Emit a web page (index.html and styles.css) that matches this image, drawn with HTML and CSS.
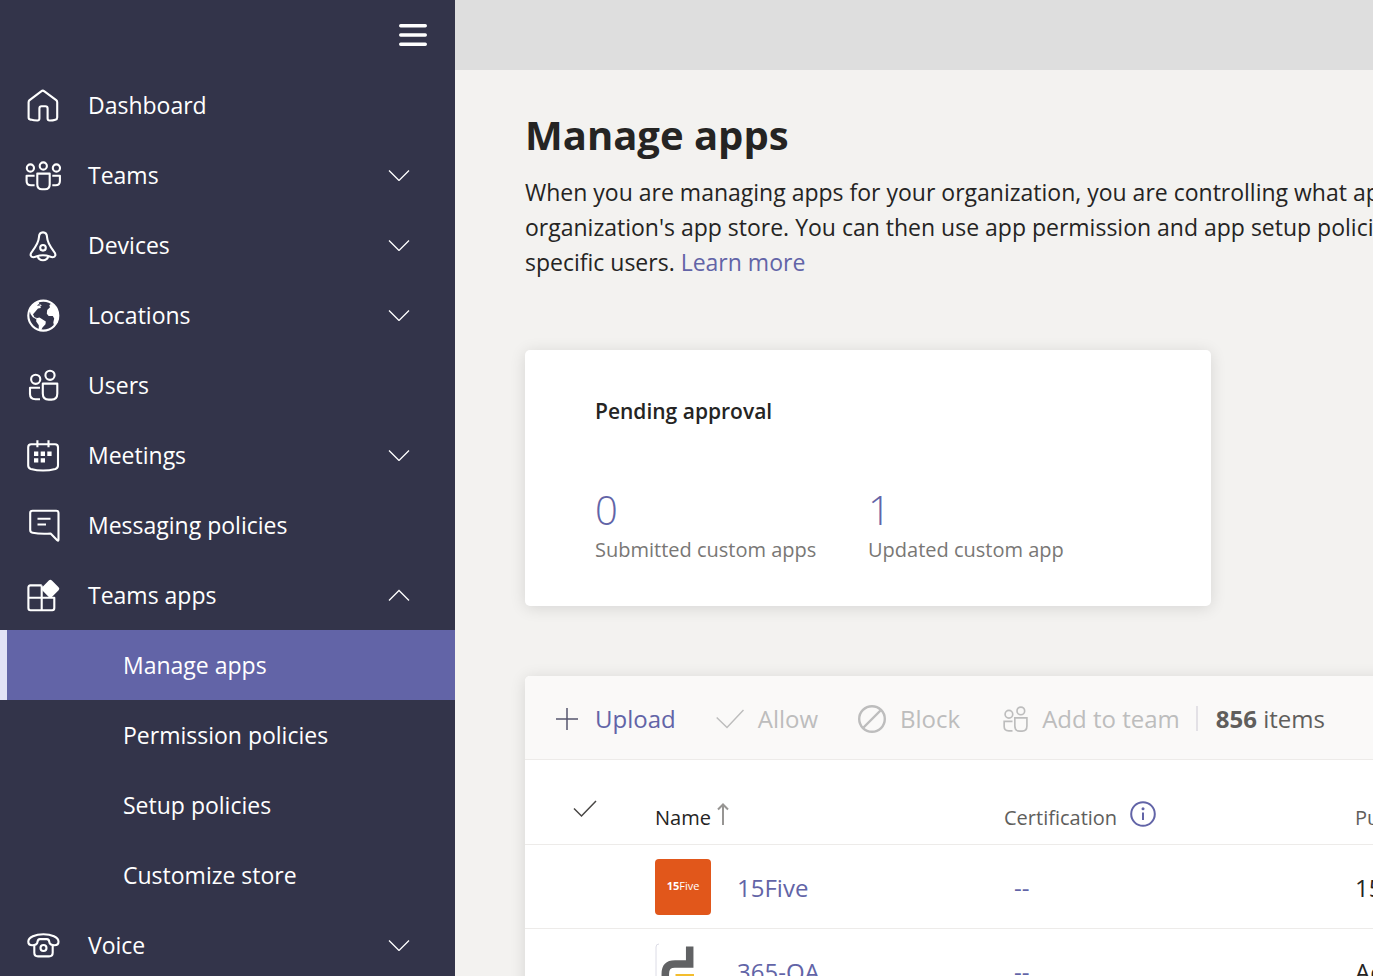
FILE: index.html
```html
<!DOCTYPE html>
<html lang="en">
<head>
  <meta charset="UTF-8" />
  <title>Manage apps</title>
  <link rel="stylesheet" href="styles.css">
</head>
<body>
  <svg class="sprite" aria-hidden="true">
    <symbol id="chevron-down" viewBox="0 0 22 12"><path d="M1 1.5 L11 11.5 L21 1.5" /></symbol>
    <symbol id="chevron-up" viewBox="0 0 22 12"><path d="M1 11.5 L11 1.5 L21 11.5" /></symbol>
    <symbol id="people" viewBox="0 0 36 36">
      <circle cx="10.7" cy="12.3" r="4.6" /><circle cx="25" cy="8.3" r="4.6" />
      <path d="M17.8 16.6 H32.3 V26.5 Q32.3 32.6 26.5 32.6 H23.8 Q17.8 32.6 17.8 26.5 Z" />
      <path d="M15 20.8 H5 V27 Q5 32.2 10.5 32.2 H15" />
    </symbol>
  </svg>

  <div class="layout">
    <nav class="sidebar">
      <div class="sidebar-top">
        <button class="menu-button" aria-label="Toggle navigation">
          <svg width="28" height="24" viewBox="0 0 28 24"><path d="M1.7 2.7 H26.3 M1.7 12 H26.3 M1.7 21.3 H26.3" /></svg>
        </button>
      </div>
      <ul class="nav-list">
        <li><a class="nav-item" href="#">
          <svg class="icon" viewBox="0 0 36 36"><path d="M3.6 15.2 Q3.6 14 4.6 13.1 L16.2 4.3 Q17.8 3.1 19.4 4.3 L31.2 13.1 Q32.2 14 32.2 15.2 V30.4 Q32.2 32.3 30.4 32.7 Q27.5 33.6 24.6 33.5 Q22.6 33.4 22.6 31.5 V21.4 Q22.6 19.2 20.4 19.2 H16.6 Q14.4 19.2 14.4 21.4 V31.5 Q14.4 33.6 12.3 33.5 Q9 33.5 5.6 32.6 Q3.6 32.2 3.6 30.4 Z" /></svg>
          <span>Dashboard</span>
        </a></li>
        <li><button class="nav-item">
          <svg class="icon" viewBox="0 0 36 36">
            <circle cx="5.4" cy="11" r="3.6" /><circle cx="18.3" cy="9" r="3.6" /><circle cx="31.4" cy="11" r="3.6" />
            <path d="M12.3 16.6 H24.7 V27.5 Q24.7 32.2 20 32.2 H17 Q12.3 32.2 12.3 27.5 Z" />
            <path d="M9.6 18.8 H1.6 V24 Q1.6 28.3 6 28.3 H9.6 M27.3 18.8 H34.9 V24 Q34.9 28.3 30.6 28.3 H27.3" />
          </svg>
          <span>Teams</span><svg class="chevron"><use href="#chevron-down" /></svg>
        </button></li>
        <li><button class="nav-item">
          <svg class="icon" viewBox="0 0 36 36">
            <path d="M18 5.4 C15.2 5.4 14 7.6 13.9 10.5 C13.7 15.5 11 19.3 7.2 24.3 C4.3 27.8 5.8 30.2 8.2 30.3 C11 30.4 12 28.2 18 28.2 C24 28.2 25 30.4 27.8 30.3 C30.2 30.2 31.7 27.8 28.8 24.3 C25 19.3 22.3 15.5 22.1 10.5 C22 7.6 20.8 5.4 18 5.4 Z" />
            <circle cx="18" cy="20.8" r="2.8" />
            <path d="M12.7 29.3 C14 34.5 22 34.5 23.3 29.3" />
          </svg>
          <span>Devices</span><svg class="chevron"><use href="#chevron-down" /></svg>
        </button></li>
        <li><button class="nav-item">
          <svg class="icon" viewBox="0 0 36 36">
            <circle cx="18.3" cy="18.6" r="15" />
            <path class="solid" d="M4.5 13 C6.5 8.5 10 5.5 13.5 4.8 L14.3 6.8 L11.8 8.5 L15.3 8.7 L15.8 11 L13 11.5 L10 15 L8 17.3 L9.5 20.3 L12 21 L11 22 L7.8 20.3 L5.5 17 Z" />
            <path class="solid" d="M11.3 21.3 L14.5 20.5 L20.8 24.4 L20.5 27.2 L17.5 30.5 L16 33.6 H13.7 L13.8 28.3 L11.2 24.5 Z" />
            <path class="solid" d="M26 6.7 L24.3 8.2 L25 10.2 L22.2 13 L21.8 16.8 L23.7 19 L27.8 19 L29.2 21.5 L28.3 25.5 L29.2 29.4 L32.3 26 Q35.5 18.5 32 12 Q30 8.6 26 6.7 Z" />
            <path class="solid" d="M14.5 7 L17 8.5 L14.8 9 Z" />
          </svg>
          <span>Locations</span><svg class="chevron"><use href="#chevron-down" /></svg>
        </button></li>
        <li><a class="nav-item" href="#">
          <svg class="icon"><use href="#people" /></svg>
          <span>Users</span>
        </a></li>
        <li><button class="nav-item">
          <svg class="icon" viewBox="0 0 36 36">
            <path d="M6.3 7.3 H30 Q33 7.3 33 10.3 V28.4 Q33 31 30.4 31.9 Q18 35.2 5.8 31.9 Q3.2 31 3.2 28.4 V10.3 Q3.2 7.3 6.3 7.3 Z" />
            <path d="M12.4 3.2 V10.3 M23.5 3.2 V10.3" />
            <path class="solid" d="M9 14.6 h4.3 v4.3 h-4.3 z M15.7 14.6 h4.3 v4.3 h-4.3 z M22.3 14.6 h4.3 v4.3 h-4.3 z M9 21.2 h4.3 v4.3 h-4.3 z M15.7 21.2 h4.3 v4.3 h-4.3 z" />
          </svg>
          <span>Meetings</span><svg class="chevron"><use href="#chevron-down" /></svg>
        </button></li>
        <li><a class="nav-item" href="#">
          <svg class="icon" viewBox="0 0 36 36">
            <path d="M7.5 3.7 H31.2 Q33.5 3.7 33.5 6 V32.5 Q33.5 34.3 32.2 33.2 L25.6 26.6 Q15 27.3 7.6 25.8 Q5.2 25.3 5.2 23 V6 Q5.2 3.7 7.5 3.7 Z" />
            <path d="M12.5 11.8 H25.5 M12.5 17.5 H21" />
          </svg>
          <span>Messaging policies</span>
        </a></li>
        <li><button class="nav-item" aria-expanded="true">
          <svg class="icon" viewBox="0 0 36 36">
            <path d="M16.7 8.4 H5.4 Q3.4 8.4 3.4 10.4 V31 Q3.4 33.2 5.4 33.2 H27.3 Q29.3 33.2 29.3 31 V20.8 H3.4 M16.7 8.4 V33.2" />
            <path class="solid" d="M23.8 3.5 Q25.3 2 26.9 3.5 L33.6 10.2 Q35.1 11.8 33.6 13.3 L26.9 20 Q25.3 21.5 23.8 20 L17.2 13.3 Q15.7 11.8 17.2 10.2 Z" />
          </svg>
          <span>Teams apps</span><svg class="chevron"><use href="#chevron-up" /></svg>
        </button>
          <ul class="nav-list">
            <li><a class="nav-item sub active" href="#" aria-current="page">Manage apps</a></li>
            <li><a class="nav-item sub" href="#">Permission policies</a></li>
            <li><a class="nav-item sub" href="#">Setup policies</a></li>
            <li><a class="nav-item sub" href="#">Customize store</a></li>
          </ul>
        </li>
        <li><button class="nav-item">
          <svg class="icon" viewBox="0 0 36 36">
            <path d="M18.4 7.2 C10.5 7.2 3.3 10.2 3.3 14.8 C3.3 17.2 4.8 18.3 7.2 18.3 C10.3 18.3 12.3 17.2 12.6 14.7 C12.7 12.8 13.5 12.2 15 12.1 H21.8 C23.3 12.2 24.1 12.8 24.2 14.7 C24.5 17.2 26.5 18.3 29.6 18.3 C32 18.3 33.5 17.2 33.5 14.8 C33.5 10.2 26.3 7.2 18.4 7.2 Z" />
            <path d="M9.3 18.3 V25.8 Q9.3 29.4 13 29.4 H24 Q27.7 29.4 27.7 25.8 V18.3" />
            <circle cx="18.5" cy="21" r="3" />
          </svg>
          <span>Voice</span><svg class="chevron"><use href="#chevron-down" /></svg>
        </button></li>
      </ul>
    </nav>

    <main class="main">
      <div class="topbar"></div>
      <div class="content">
        <h1>Manage apps</h1>
        <p class="intro">When you are managing apps for your organization, you are controlling what apps are available to users in your<br>
          organization's app store. You can then use app permission and app setup policies to configure what apps for<br>
          specific users. <a href="#">Learn more</a></p>

        <section class="card">
          <h2>Pending approval</h2>
          <div class="stats">
            <div><a class="number" href="#">0</a><span class="label">Submitted custom apps</span></div>
            <div><a class="number" href="#">1</a><span class="label">Updated custom app</span></div>
          </div>
        </section>

        <section class="panel">
          <div class="toolbar">
            <button class="tool upload">
              <svg width="22" height="22" viewBox="0 0 22 22"><path d="M0 11 H22 M11 0 V22" /></svg>
              Upload
            </button>
            <button class="tool allow" disabled>
              <svg width="28" height="20" viewBox="0 0 28 20"><path d="M.7 8.5 L11 18.5 L27.5 1" /></svg>
              Allow
            </button>
            <button class="tool block" disabled>
              <svg width="28" height="28" viewBox="0 0 28 28"><circle cx="14" cy="14" r="12.8" /><path d="M5.5 22.5 L22.5 5.5" /></svg>
              Block
            </button>
            <button class="tool team" disabled>
              <svg width="30" height="30"><use href="#people" /></svg>
              Add to team
            </button>
            <span class="divider"></span>
            <span class="count"><b>856</b> items</span>
          </div>
          <table>
            <thead>
              <tr>
                <th class="col-check"><button aria-label="Select all">
                  <svg width="24" height="18" viewBox="0 0 24 18"><path d="M1 8.5 L8.5 16 L23 1" /></svg>
                </button></th>
                <th class="col-name"><div class="head">Name
                  <svg width="12" height="22" viewBox="0 0 12 22"><path d="M6 22 V1.5 M1 6.5 L6 1.5 L11 6.5" /></svg>
                </div></th>
                <th class="col-cert"><div class="head">Certification
                  <svg class="info" width="26" height="26" viewBox="0 0 26 26"><circle cx="13" cy="13" r="11.8" /><path d="M13 11.5 V19" /><circle class="dot" cx="13" cy="7.7" r="1.5" /></svg>
                </div></th>
                <th><div class="head">Publisher</div></th>
              </tr>
            </thead>
            <tbody>
              <tr>
                <td></td>
                <td><div class="app">
                  <span class="logo five"><b>15</b>Five</span>
                  <a href="#">15Five</a>
                </div></td>
                <td class="cert">--</td>
                <td>15Five</td>
              </tr>
              <tr>
                <td></td>
                <td><div class="app">
                  <svg class="logo" viewBox="0 0 56 56">
                    <path d="M1 56 V4 Q1 1 4 1" stroke="#dcdce6" />
                    <path d="M34.7 3.5 V21 H20 Q10.3 21 10.3 31 V47" stroke="#616264" stroke-width="7.5" />
                    <path d="M20.5 33 H39" stroke="#f3bd2e" stroke-width="4" />
                  </svg>
                  <a href="#">365-QA</a>
                </div></td>
                <td class="cert">--</td>
                <td>Adenin</td>
              </tr>
            </tbody>
          </table>
        </section>
      </div>
    </main>
  </div>
</body>
</html>
```
FILE: styles.css
```css
* {
  box-sizing: border-box;
}
body {
  margin: 0;
  background-color: #f3f2f0;
  color: #252423;
  font-family: "Open Sans", "Noto Sans", sans-serif;
  font-size: 23px;
  overflow: hidden;
}
a {
  color: #6264a7;
  text-decoration: none;
}
button {
  font: inherit;
  color: inherit;
  background: none;
  border: none;
  padding: 0;
  cursor: pointer;
}
svg {
  fill: none;
  stroke: currentColor;
  flex: none;
}
.sprite {
  display: none;
}
.layout {
  display: flex;
  height: 100vh;
}

/* navigation */
.sidebar {
  flex: none;
  width: 455px;
  overflow: hidden;
  background-color: #33344a;
  color: #fff;
}
.sidebar-top {
  display: flex;
  align-items: center;
  justify-content: flex-end;
  height: 70px;
  padding-right: 28px;
}
.menu-button {
  display: flex;
}
.menu-button svg {
  stroke-width: 3.4;
  stroke-linecap: round;
}
.nav-list {
  list-style: none;
  margin: 0;
  padding: 0;
}
.nav-item {
  display: flex;
  align-items: center;
  width: 100%;
  height: 70px;
  padding: 0 45px 0 25px;
  color: #fff;
  text-align: left;
}
.nav-item span {
  flex: 1;
}
.nav-item.sub {
  padding-left: 123px;
}
.nav-item.active {
  background-color: #6264a7;
  border-left: 7px solid #e2e2f6;
  padding-left: 116px;
}
.icon {
  width: 36px;
  height: 36px;
  margin-right: 27px;
  stroke-width: 2.1;
  stroke-linejoin: round;
}
.solid {
  fill: currentColor;
  stroke: none;
}
.chevron {
  width: 22px;
  height: 12px;
  stroke-width: 1.3;
}

/* page */
.main {
  flex: 1;
  min-width: 0;
  overflow: hidden;
}
.topbar {
  height: 70px;
  background-color: #dedede;
}
.content {
  padding: 35px 0 0 70px;
}
h1 {
  margin: 0;
  font-size: 40px;
  line-height: 60px;
}
.intro {
  margin: 10px 0 70px;
  line-height: 35px;
  white-space: nowrap;
}
.card {
  width: 686px;
  height: 256px;
  padding: 46px 70px 0;
  background-color: #fff;
  border-radius: 5px;
  box-shadow: 0 2px 16px rgba(0, 0, 0, 0.12);
}
h2 {
  margin: 0;
  font-size: 21px;
  font-weight: 600;
  line-height: 30px;
}
.stats {
  display: grid;
  grid-template-columns: 273px 1fr;
  margin-top: 59px;
}
.number {
  display: block;
  font-size: 40px;
  font-weight: 300;
  line-height: 50px;
}
.label {
  display: block;
  color: #797775;
  font-size: 20px;
  line-height: 30px;
}

/* app list */
.panel {
  width: 1400px;
  margin-top: 70px;
  background-color: #fff;
  border-radius: 5px;
  box-shadow: 0 2px 16px rgba(0, 0, 0, 0.12);
}
.toolbar {
  display: flex;
  align-items: center;
  height: 84px;
  padding: 2px 0 0 31px;
  background-color: #faf9f8;
  border-bottom: 1px solid #edebe9;
  border-radius: 5px 5px 0 0;
  font-size: 24px;
}
.tool {
  display: flex;
  align-items: center;
  gap: 14px;
  margin-right: 40px;
}
.tool svg {
  stroke-width: 1.5;
}
.tool:disabled {
  color: #bdbdbd;
  cursor: default;
}
.upload {
  gap: 17px;
  color: #6264a7;
}
.upload svg {
  color: #55566e;
}
.block svg {
  stroke-width: 2.4;
}
.team {
  gap: 12px;
  margin-right: 16px;
}
.team svg {
  stroke-width: 2;
}
.divider {
  width: 2px;
  height: 25px;
  margin-right: 18px;
  background-color: #e3e1e6;
}
.count {
  color: #605e5c;
}
table {
  width: 100%;
  table-layout: fixed;
  border-collapse: collapse;
  font-size: 24px;
}
th,
td {
  height: 84px;
  padding: 2px 0 0;
  border-bottom: 1px solid #edebe9;
  text-align: left;
  font-weight: 400;
}
th {
  color: #605e5c;
  font-size: 20px;
}
.col-check {
  width: 130px;
  padding: 18px 0 0 48px;
}
.col-check svg {
  stroke-width: 1.5;
  color: #484644;
}
.col-name {
  width: 349px;
  color: #252423;
}
.col-cert {
  width: 351px;
}
.head {
  display: flex;
  align-items: center;
  gap: 6px;
  padding-top: 30px;
}
.head svg {
  margin-bottom: 8px;
  stroke-width: 2;
  color: #979593;
}
.head .info {
  margin-left: 7px;
  color: #6264a7;
}
.head .dot {
  fill: currentColor;
  stroke: none;
}
.app {
  display: flex;
  align-items: center;
  gap: 26px;
}
.logo {
  width: 56px;
  height: 56px;
}
.five {
  background-color: #e1571b;
  border-radius: 4px;
  color: #fff;
  font-size: 11px;
  line-height: 54px;
  text-align: center;
}
.cert {
  padding-left: 10px;
  color: #6264a7;
}
```
